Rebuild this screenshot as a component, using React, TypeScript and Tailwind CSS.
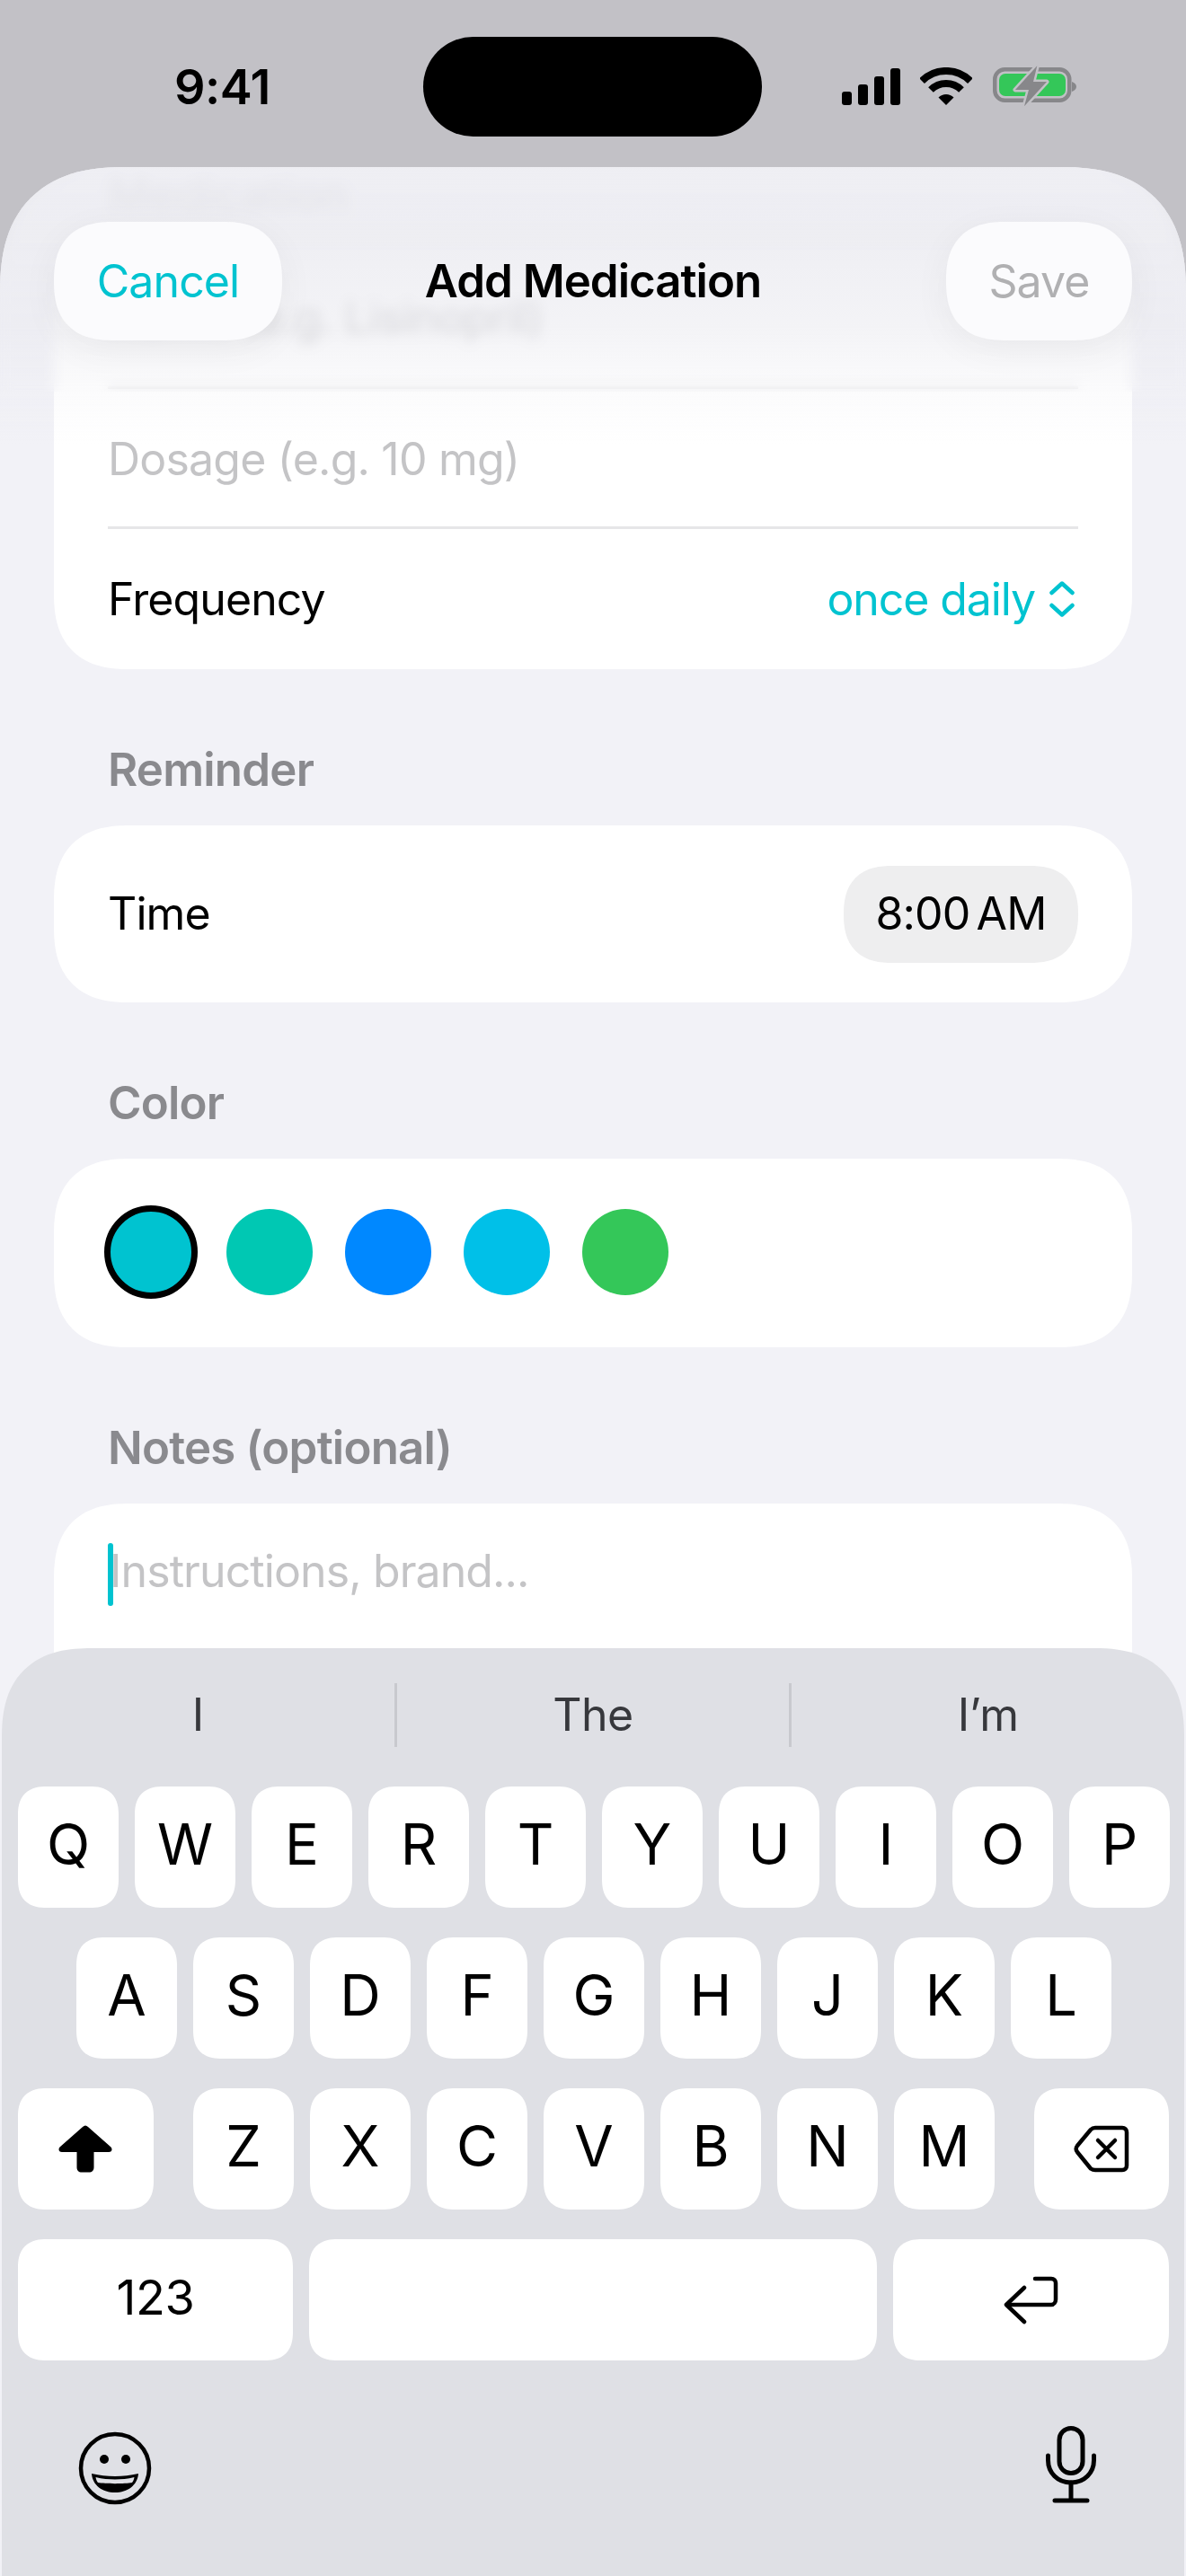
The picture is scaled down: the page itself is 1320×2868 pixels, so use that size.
import React from "react";

const rowOne = ["Q", "W", "E", "R", "T", "Y", "U", "I", "O", "P"];
const rowTwo = ["A", "S", "D", "F", "G", "H", "J", "K", "L"];
const rowThree = ["Z", "X", "C", "V", "B", "N", "M"];
const swatches = ["bg-[#00c8b3]", "bg-[#0088ff]", "bg-[#00c0e8]", "bg-[#34c759]"];

function Key({ children, className = "w-[112px]" }: { children?: React.ReactNode; className?: string }) {
  return (
    <div className={`h-[135px] ${className} flex items-center justify-center rounded-[32px] [corner-shape:superellipse(1.3)] bg-white text-[63px] leading-none tracking-[-1px] text-black pb-[6px]`}>
      {children}
    </div>
  );
}

function SectionLabel({ children }: { children: React.ReactNode }) {
  return <div className="h-[60px] mb-[30px] px-[120px] pb-[3px] flex items-center text-[51px] font-semibold tracking-[-0.8px] text-[#8a8a8e]">{children}</div>;
}

function Card({ children, className = "" }: { children: React.ReactNode; className?: string }) {
  return <div className={`mx-[60px] bg-white rounded-[84px] [corner-shape:superellipse(1.3)] ${className}`}>{children}</div>;
}

export default function App() {
  return (
    <div className="relative w-[1320px] h-[2868px] overflow-hidden bg-[#c2c1c6] font-['Inter','Liberation_Sans',sans-serif] flex flex-col">
      {/* status bar */}
      <div className="h-[186px] shrink-0 flex items-start">
        <div className="w-[471px] pt-[70px] pl-[194px] text-[54px] leading-[54px] font-semibold tracking-[-0.5px] text-black">9:41</div>
        <div className="mt-[41px] w-[377px] h-[111px] rounded-full bg-black" />
        <div className="flex items-start pt-[75px] ml-[89px]">
          <svg width="65" height="42" viewBox="0 0 65 42" className="mt-[1px]">
            <rect x="0" y="26" width="11" height="15" rx="3" />
            <rect x="18" y="18" width="11" height="23" rx="3" />
            <rect x="36" y="9" width="11" height="32" rx="3" />
            <rect x="54" y="0" width="11" height="41" rx="3" />
          </svg>
          <svg width="58" height="42" viewBox="0 0 58 42" className="ml-[22px]">
            <path d="M2.1 15.1A38 38 0 0 1 55.9 15.1" fill="none" stroke="#000" strokeWidth="8" />
            <path d="M12 25A24 24 0 0 1 46 25" fill="none" stroke="#000" strokeWidth="8" />
            <path d="M29 42L20.5 33.5A12 12 0 0 1 37.5 33.5Z" fill="#000" />
          </svg>
          <svg width="96" height="48" viewBox="0 0 96 48" className="ml-[22px] -mt-[3px]">
            <rect x="3.250" y="5.250" width="83" height="34.500" rx="11" fill="none" stroke="#87878a" strokeWidth="4.500" />
            <rect x="8" y="10" width="74" height="25" rx="7" fill="#34c759" />
            <path d="M89 19C92 20 94 22 94 24.500C94 27 92 29 89 30Z" fill="#87878a" />
            <path d="M50.300 1.300L26 28H41L36 46.300L61 19H46Z" fill="#87878a" stroke="#c2c1c6" strokeWidth="5" strokeLinejoin="round" paintOrder="stroke" />
          </svg>
        </div>
      </div>

      {/* sheet */}
      <div className="relative flex-1 bg-[#f2f2f7] rounded-t-[140px] [corner-shape:superellipse(1.3)] overflow-hidden">
        <div className="flex flex-col">
          <div className="mt-[1px]">
            <SectionLabel>Medication</SectionLabel>
          </div>
          <Card>
            <div className="h-[153px] px-[60px] flex items-center text-[50px] tracking-[-0.9px] text-[#c4c4c6]">Name (e.g. Lisinopril)</div>
            <div className="mx-[60px] h-[3px] bg-[#e6e6e8]" />
            <div className="h-[153px] pt-[4px] px-[60px] flex items-center text-[50px] tracking-[-0.8px] text-[#c4c4c6]">Dosage (e.g. 10 mg)</div>
            <div className="mx-[60px] h-[3px] bg-[#e6e6e8]" />
            <div className="h-[156px] px-[60px] flex items-center justify-between text-[50px] tracking-[-0.9px]">
              <span className="text-black">Frequency</span>
              <span className="flex items-center gap-[16px] tracking-[-1.1px] text-[#00c3d0]">
                once daily
                <svg width="28" height="40" viewBox="0 0 28 40" fill="none" stroke="#00c3d0" strokeWidth="4.5" strokeLinecap="round" strokeLinejoin="round" className="mr-[4px]">
                  <path d="M2.500 13L14 2.500L25.500 13" />
                  <path d="M2.500 27L14 37.500L25.500 27" />
                </svg>
              </span>
            </div>
          </Card>

          <div className="mt-[84px]">
            <SectionLabel>Reminder</SectionLabel>
          </div>
          <Card className="h-[197px] pl-[60px] pr-[60px] flex items-center justify-between">
            <span className="text-[50px] tracking-[-0.9px] text-black">Time</span>
            <span className="h-[108px] w-[261px] rounded-[54px] [corner-shape:superellipse(1.3)] bg-[#eeeeef] flex items-center justify-center text-[50px] tracking-[-0.9px] [word-spacing:-6px] text-black">8:00 AM</span>
          </Card>

          <div className="mt-[84px]">
            <SectionLabel>Color</SectionLabel>
          </div>
          <Card className="h-[210px] pl-[60px] pb-[2px] flex items-center gap-[36px]">
            <div className="w-[104px] h-[104px] -mx-[4px] rounded-full bg-[#00c3d0] border-[7px] border-black" />
            {swatches.map((c) => (
              <div key={c} className={`w-[96px] h-[96px] rounded-full ${c}`} />
            ))}
          </Card>

          <div className="mt-[84px]">
            <SectionLabel>Notes (optional)</SectionLabel>
          </div>
          <Card className="h-[400px] pl-[60px] pt-[44px]">
            <div className="relative flex items-center h-[70px] text-[50px] tracking-[-0.9px] text-[#c4c4c6]">
              <div className="absolute left-0 top-0 w-[6px] h-[70px] rounded-full bg-[#00c3d0]" />
              <span className="pl-[2px] pb-[8px]">Instructions, brand...</span>
            </div>
          </Card>
        </div>

        {/* blur under the nav bar */}
        <div className="absolute inset-x-0 top-0 h-[250px] backdrop-blur-[7px] [mask-image:linear-gradient(to_bottom,black_78%,transparent_100%)]" />
        <div className="absolute inset-x-0 top-0 h-[310px] bg-[linear-gradient(to_bottom,rgba(238,238,243,0.97)_0%,rgba(236,236,241,0.85)_30%,rgba(232,232,238,0.52)_57%,rgba(232,232,238,0.17)_80%,rgba(232,232,238,0)_100%)]" />

        {/* nav bar */}
        <div className="absolute inset-x-[60px] top-[61px] h-[132px] flex items-center">
          <div className="flex-1 flex justify-start">
            <div className="h-[132px] w-[254px] rounded-[66px] [corner-shape:superellipse(1.3)] bg-[#fbfbfd] shadow-[0_10px_40px_rgba(0,0,0,0.05)] flex items-center justify-center text-[50px] tracking-[-0.9px] text-[#00c3d0]">Cancel</div>
          </div>
          <div className="text-[51px] font-semibold tracking-[-1px] text-black">Add Medication</div>
          <div className="flex-1 flex justify-end">
            <div className="h-[132px] w-[207px] rounded-[66px] [corner-shape:superellipse(1.3)] bg-[#fbfbfd] shadow-[0_10px_40px_rgba(0,0,0,0.05)] flex items-center justify-center text-[50px] tracking-[-0.9px] text-[#b0b0b2]">Save</div>
          </div>
        </div>
      </div>

      {/* keyboard */}
      <div className="absolute left-[2px] right-[2px] bottom-0 h-[1033px] bg-[#dfe0e5] rounded-t-[100px] [corner-shape:superellipse(1.3)] flex flex-col">
        <div className="h-[154px] flex items-center pb-[6px] text-[50px] text-[#37383c] tracking-[-0.5px]">
          <div className="flex-1 text-center">I</div>
          <div className="w-[3px] h-[71px] bg-[#c8c9ce]" />
          <div className="flex-1 text-center">The</div>
          <div className="w-[3px] h-[71px] bg-[#c8c9ce]" />
          <div className="flex-1 text-center">I’m</div>
        </div>
        <div className="flex flex-col gap-[33px] pl-[1px]">
          <div className="flex justify-center gap-[18px]">
            {rowOne.map((k) => <Key key={k}>{k}</Key>)}
          </div>
          <div className="flex justify-center gap-[18px]">
            {rowTwo.map((k) => <Key key={k}>{k}</Key>)}
          </div>
          <div className="flex justify-center pl-[17px] pr-[17px]">
            <Key className="w-[151px]">
              <svg width="60" height="53" viewBox="0 0 60 53" className="mt-[6px]"><path d="M30 0.5C31 0.5 32 1 33 2L58.5 24.5C60.5 26.5 59.5 30 56 30H39.5V47C39.5 50.5 37.5 52.5 34 52.5H26C22.5 52.5 20.5 50.5 20.5 47V30H4C0.5 30 -0.5 26.5 1.5 24.5L27 2C28 1 29 0.5 30 0.5Z" fill="#000" /></svg>
            </Key>
            <div className="flex gap-[18px] ml-[44px] mr-[44px]">
              {rowThree.map((k) => <Key key={k}>{k}</Key>)}
            </div>
            <Key className="w-[151px]">
              <svg width="62" height="53" viewBox="0 0 62 53" fill="none" stroke="#000" strokeWidth="4.500" strokeLinecap="round" strokeLinejoin="round" className="mt-[6px]">
                <path d="M24 3H54C57 3 59 5 59 8V45C59 48 57 50 54 50H24C22 50 20.500 49.500 19 48.500L4 30C2.500 28 2.500 25 4 23L19 5C20.500 3.500 22 3 24 3Z" />
                <path d="M27 17L46 36M46 17L27 36" />
              </svg>
            </Key>
          </div>
          <div className="flex justify-center gap-[18px] px-[17px]">
            <Key className="w-[306px]"><span className="text-[54px] tracking-[-0.4px]">123</span></Key>
            <Key className="w-[632px]" />
            <Key className="w-[307px]">
              <svg width="62" height="54" viewBox="0 0 62 54" fill="none" stroke="#000" strokeWidth="4.500" strokeLinecap="round" strokeLinejoin="round" className="mt-[6px]">
                <path d="M35 3H53C56 3 58 5 58 8V26C58 29 56 32 53 32H4" />
                <path d="M23 13L3 32L23 51" />
              </svg>
            </Key>
          </div>
        </div>
        <div className="flex-1 flex items-start justify-between pl-[85px] pr-[98px] pt-[79px]">
          <svg width="82" height="82" viewBox="0 0 82 82" fill="none">
            <circle cx="41" cy="41" r="38" stroke="#000" strokeWidth="4.500" />
            <circle cx="29" cy="31" r="5" fill="#000" />
            <circle cx="53" cy="31" r="5" fill="#000" />
            <path d="M15 47C24 49 32 50 41 50C50 50 58 49 67 47C66 60 55 68 41 68C27 68 16 60 15 47Z" fill="#000" />
            <path d="M19.500 51C27 52.800 34 53.500 41 53.500C48 53.500 55 52.800 62.500 51C62 54 61 56 60 57C52 58.500 30 58.500 22 57C21 56 20 54 19.500 51Z" fill="#dfe0e5" />
          </svg>
          <svg width="56" height="86" viewBox="0 0 56 86" fill="none" stroke="#000" strokeWidth="5" strokeLinecap="round" className="-mt-[6px]">
            <rect x="15" y="2.500" width="26" height="50" rx="13" />
            <path d="M2.500 33V38C2.500 52 13 63 28 63C43 63 53.500 52 53.500 38V33" />
            <path d="M28 63V83M10 83H46" />
          </svg>
        </div>
      </div>
    </div>
  );
}
